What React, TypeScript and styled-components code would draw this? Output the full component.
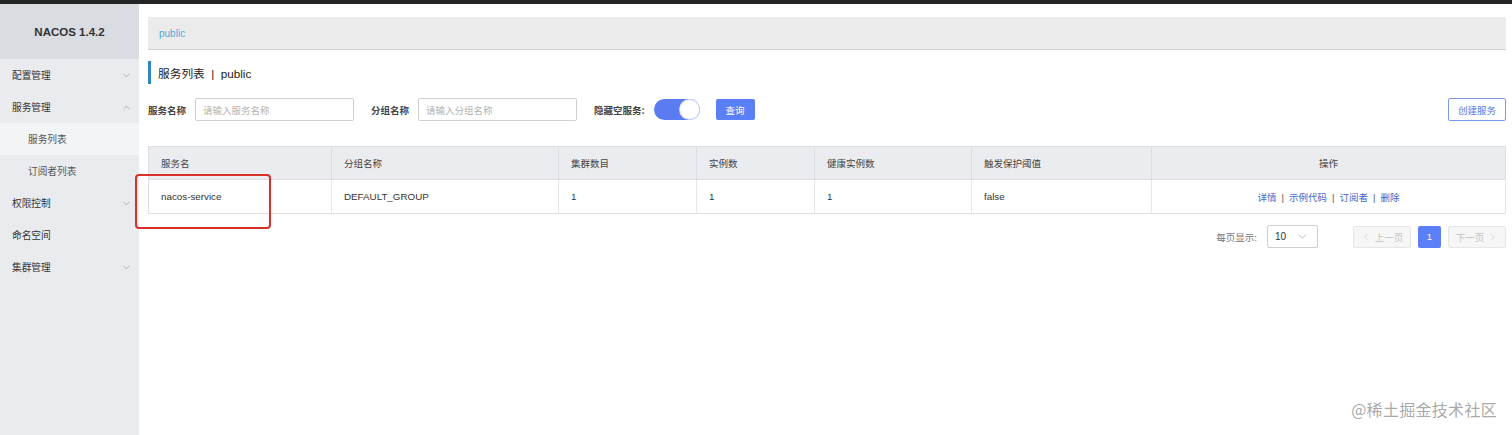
import React from 'react';
import styled, { createGlobalStyle } from 'styled-components';
import { ChevronDown, ChevronUp, ChevronLeft, ChevronRight } from 'lucide-react';

const GlobalStyle = createGlobalStyle`
  html, body {
    margin: 0;
    padding: 0;
    background: #fff;
    font-family: "Liberation Sans", Arial, "Noto Sans CJK SC", sans-serif;
    color: #333;
  }
  * { box-sizing: border-box; }
`;

type MenuItem = { label: string; arrow?: 'down' | 'up'; sub?: boolean; active?: boolean };

const menu: MenuItem[] = [
  { label: '配置管理', arrow: 'down' },
  { label: '服务管理', arrow: 'up' },
  { label: '服务列表', sub: true, active: true },
  { label: '订阅者列表', sub: true },
  { label: '权限控制', arrow: 'down' },
  { label: '命名空间' },
  { label: '集群管理', arrow: 'down' },
];

const columns = [
  { title: '服务名', width: 183 },
  { title: '分组名称', width: 227 },
  { title: '集群数目', width: 138 },
  { title: '实例数', width: 118 },
  { title: '健康实例数', width: 157 },
  { title: '触发保护阈值', width: 180 },
  { title: '操作', width: 354, center: true },
];

const rows = [
  ['nacos-service', 'DEFAULT_GROUP', '1', '1', '1', 'false'],
];

const actions = ['详情', '示例代码', '订阅者', '删除'];

const App: React.FC = () => {
  return (
    <Page>
      <GlobalStyle />
      <TopBar />
      <Body>
        <Sidebar>
          <Logo>NACOS 1.4.2</Logo>
          {menu.map((m) => (
            <MenuRow key={m.label} $sub={m.sub} $active={m.active}>
              <span>{m.label}</span>
              {m.arrow === 'down' && <ChevronDown size={11} strokeWidth={1.4} />}
              {m.arrow === 'up' && <ChevronUp size={11} strokeWidth={1.4} />}
            </MenuRow>
          ))}
        </Sidebar>
        <Main>
          <Breadcrumb>public</Breadcrumb>
          <Title>服务列表&nbsp;&nbsp;|&nbsp;&nbsp;public</Title>
          <Filters>
            <Label>服务名称</Label>
            <Input placeholder="请输入服务名称" />
            <Label>分组名称</Label>
            <Input placeholder="请输入分组名称" />
            <Label $gap={9}>隐藏空服务:</Label>
            <Toggle>
              <Knob />
            </Toggle>
            <PrimaryButton>查询</PrimaryButton>
            <Spacer />
            <OutlineButton>创建服务</OutlineButton>
          </Filters>
          <Table>
            <thead>
              <tr>
                {columns.map((c) => (
                  <Th key={c.title} style={{ width: c.width }} $center={c.center}>
                    {c.title}
                  </Th>
                ))}
              </tr>
            </thead>
            <tbody>
              {rows.map((r) => (
                <tr key={r[0]}>
                  {r.map((cell, i) => (
                    <Td key={i}>{cell}</Td>
                  ))}
                  <Td $center>
                    {actions.map((a, i) => (
                      <React.Fragment key={a}>
                        {i > 0 && <Sep>|</Sep>}
                        <Link>{a}</Link>
                      </React.Fragment>
                    ))}
                  </Td>
                </tr>
              ))}
            </tbody>
          </Table>
          <Pager>
            <PagerLabel>每页显示:</PagerLabel>
            <Select>
              <span>10</span>
              <ChevronDown size={13} strokeWidth={1.3} color="#999" />
            </Select>
            <PageNav>
              <PageButton disabled>
                <ChevronLeft size={10} strokeWidth={1.4} />
                上一页
              </PageButton>
              <PageNumber>1</PageNumber>
              <PageButton disabled>
                下一页
                <ChevronRight size={10} strokeWidth={1.4} />
              </PageButton>
            </PageNav>
          </Pager>
        </Main>
      </Body>
      <Highlight />
      <Watermark>@稀土掘金技术社区</Watermark>
    </Page>
  );
};

const Page = styled.div`
  position: relative;
  width: 1512px;
  height: 435px;
  overflow: hidden;
  display: flex;
  flex-direction: column;
`;

const TopBar = styled.div`
  height: 4px;
  background: #232425;
  flex-shrink: 0;
`;

const Body = styled.div`
  flex: 1;
  display: flex;
`;

const Sidebar = styled.nav`
  width: 139px;
  flex-shrink: 0;
  background: #eaebee;
  display: flex;
  flex-direction: column;
`;

const Logo = styled.div`
  height: 55px;
  background: #d9dce1;
  display: flex;
  align-items: center;
  justify-content: center;
  font-weight: bold;
  font-size: 11.5px;
  color: #333;
`;

const MenuRow = styled.div<{ $sub?: boolean; $active?: boolean }>`
  height: 32px;
  display: flex;
  align-items: center;
  justify-content: space-between;
  padding: 0 7px 0 ${(p) => (p.$sub ? '28px' : '12px')};
  font-family: "Noto Sans CJK SC", sans-serif;
  font-size: 9.7px;
  color: ${(p) => (p.$sub ? '#555' : '#333')};
  background: ${(p) => (p.$active ? '#f3f4f6' : 'transparent')};
  svg {
    color: #8f8f8f;
  }
`;

const Main = styled.main`
  flex: 1;
  padding: 13px 7px 0 9px;
  display: flex;
  flex-direction: column;
`;

const Breadcrumb = styled.div`
  height: 33px;
  background: #ebebeb;
  border-bottom: 1px solid #d2d2d2;
  display: flex;
  align-items: center;
  padding-left: 11px;
  font-size: 10px;
  color: #56a7d8;
`;

const Title = styled.div`
  margin-top: 11px;
  height: 23px;
  border-left: 3px solid #2d87c2;
  display: flex;
  align-items: center;
  padding-left: 7px;
  font-family: "Liberation Sans", "Noto Sans CJK SC", sans-serif;
  font-size: 11.7px;
  color: #222;
`;

const Filters = styled.div`
  margin-top: 14px;
  height: 23px;
  display: flex;
  align-items: center;
`;

const Label = styled.span<{ $gap?: number }>`
  font-family: "Noto Sans CJK SC", sans-serif;
  font-weight: bold;
  font-size: 9.5px;
  color: #444;
  margin-right: ${(p) => p.$gap ?? 9}px;
`;

const Input = styled.input`
  width: 159px;
  height: 23px;
  border: 1px solid #cfcfcf;
  border-radius: 2px;
  padding: 0 7px;
  margin-right: 17px;
  font-family: "Noto Sans CJK SC", sans-serif;
  font-size: 9.5px;
  outline: none;
  &::placeholder {
    color: #b3b3b3;
  }
`;

const Toggle = styled.div`
  width: 46px;
  height: 21px;
  border-radius: 11px;
  background: #5b7bf3;
  display: flex;
  align-items: center;
  justify-content: flex-end;
  padding-right: 1px;
  margin-right: 16px;
`;

const Knob = styled.div`
  width: 19px;
  height: 19px;
  border-radius: 50%;
  background: #fff;
  box-shadow: 0 0 0 1px #d6dcf5;
`;

const PrimaryButton = styled.button`
  width: 39px;
  height: 21px;
  border: none;
  border-radius: 2px;
  background: #5b7ff6;
  color: #fff;
  font-family: "Noto Sans CJK SC", sans-serif;
  font-size: 9.5px;
  padding: 0;
`;

const Spacer = styled.div`
  flex: 1;
`;

const OutlineButton = styled.button`
  width: 58px;
  height: 23px;
  border: 1px solid #7d97ee;
  border-radius: 2px;
  background: #fff;
  color: #5a78e6;
  font-family: "Noto Sans CJK SC", sans-serif;
  font-size: 9.5px;
  padding: 0;
`;

const Table = styled.table`
  margin-top: 25px;
  width: 1357px;
  border-collapse: collapse;
  table-layout: fixed;
  border: 1px solid #dcdee3;
`;

const Th = styled.th<{ $center?: boolean }>`
  height: 33px;
  background: #ebecf0;
  border-right: 1px solid #dcdee3;
  border-bottom: 1px solid #dcdee3;
  text-align: ${(p) => (p.$center ? 'center' : 'left')};
  padding: 0 12px;
  font-family: "Noto Sans CJK SC", sans-serif;
  font-weight: normal;
  font-size: 9.5px;
  color: #444;
`;

const Td = styled.td<{ $center?: boolean }>`
  height: 34px;
  border-right: 1px solid #e4e6ea;
  text-align: ${(p) => (p.$center ? 'center' : 'left')};
  padding: 0 12px;
  font-family: "Liberation Sans", "Noto Sans CJK SC", sans-serif;
  font-size: 9.8px;
  color: #333;
`;

const Link = styled.span`
  font-family: "Noto Sans CJK SC", sans-serif;
  font-size: 9.5px;
  color: #3e64c7;
`;

const Sep = styled.span`
  margin: 0 5px;
  color: #555;
  font-size: 9.5px;
`;

const Pager = styled.div`
  margin-top: 11px;
  display: flex;
  align-items: center;
  justify-content: flex-end;
`;

const PagerLabel = styled.span`
  font-family: "Noto Sans CJK SC", sans-serif;
  font-size: 9.5px;
  color: #777;
  margin-right: 10px;
`;

const Select = styled.div`
  width: 51px;
  height: 23px;
  border: 1px solid #cfcfcf;
  border-radius: 2px;
  display: flex;
  align-items: center;
  justify-content: space-between;
  padding: 0 8px 0 7px;
  font-size: 10px;
  color: #333;
  margin-right: 35px;
`;

const PageNav = styled.div`
  display: flex;
  align-items: center;
  gap: 7px;
`;

const PageButton = styled.button`
  width: 58px;
  height: 22px;
  border: 1px solid #e6e6e6;
  border-radius: 2px;
  background: #f6f6f6;
  color: #c3c3c3;
  display: flex;
  align-items: center;
  justify-content: center;
  gap: 4px;
  padding: 0;
  font-family: "Noto Sans CJK SC", sans-serif;
  font-size: 9.5px;
`;

const PageNumber = styled.button`
  width: 23px;
  height: 22px;
  border: none;
  border-radius: 2px;
  background: #5b7ff6;
  color: #fff;
  font-size: 9.5px;
  padding: 0;
`;

const Highlight = styled.div`
  position: absolute;
  left: 135px;
  top: 174px;
  width: 136px;
  height: 55px;
  border: 2px solid #d9302a;
  border-radius: 4px;
  pointer-events: none;
`;

const Watermark = styled.div`
  position: absolute;
  right: 15px;
  bottom: 14px;
  font-family: "Noto Sans CJK SC", sans-serif;
  font-size: 16px;
  color: rgba(130, 130, 130, 0.7);
  letter-spacing: 0.3px;
`;

export default App;
